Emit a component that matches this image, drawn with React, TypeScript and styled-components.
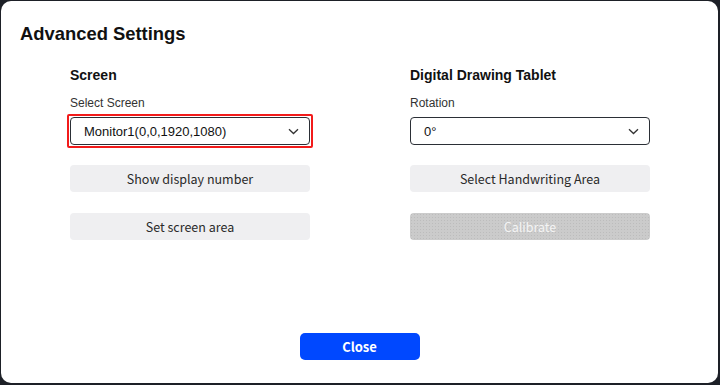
import React from "react";
import styled, { createGlobalStyle } from "styled-components";

const Global = createGlobalStyle`
  html, body { margin: 0; padding: 0; background: #1d2027; }
  body { width: 720px; height: 385px; overflow: hidden; }
  * { box-sizing: border-box; }
`;

const Frame = styled.div`
  width: 720px;
  height: 385px;
  padding: 1px 2px 2px 1px;
  background: #1d2027;
`;

const Card = styled.div`
  width: 100%;
  height: 100%;
  background: #fff;
  border-radius: 10px;
  display: flex;
  flex-direction: column;
  padding: 23px 0 0 19px;
`;

const Title = styled.h1`
  margin: 0;
  font-family: "Liberation Sans", Arial, sans-serif;
  font-weight: 700;
  font-size: 18.4px;
  line-height: 20px;
  color: #111;
`;

const Columns = styled.div`
  display: flex;
  gap: 100px;
  padding-left: 50px;
  margin-top: 22px;
`;

const Column = styled.div`
  width: 240px;
  display: flex;
  flex-direction: column;
`;

const Heading = styled.h2`
  margin: 0;
  font-family: "Liberation Sans", Arial, sans-serif;
  font-weight: 700;
  font-size: 14px;
  line-height: 18px;
  color: #111;
`;

const Label = styled.div`
  margin-top: 12px;
  font-family: "Liberation Sans", Arial, sans-serif;
  font-size: 12px;
  line-height: 14px;
  color: #333;
`;

const SelectWrap = styled.div<{ $highlight?: boolean }>`
  position: relative;
  margin-top: 7px;
  height: 28px;
  &::after {
    content: "";
    display: ${(p) => (p.$highlight ? "block" : "none")};
    position: absolute;
    left: -3px;
    top: -3px;
    right: -3px;
    bottom: -3px;
    border: 2px solid #f21b1b;
    border-radius: 2px;
    pointer-events: none;
  }
`;

const SelectBox = styled.div`
  height: 28px;
  border: 1px solid #2b2f36;
  border-radius: 4px;
  display: flex;
  align-items: center;
  justify-content: space-between;
  padding: 0 10px 0 13px;
  font-family: "Liberation Sans", Arial, sans-serif;
  font-size: 13px;
  color: #111;
`;

const Chevron = () => (
  <svg width="11" height="7" viewBox="0 0 11 7" fill="none">
    <path d="M1 1.2 L5.5 5.5 L10 1.2" stroke="#333" strokeWidth="1.3" />
  </svg>
);

const Button = styled.button<{ $first?: boolean; $disabled?: boolean }>`
  margin-top: ${(p) => (p.$first ? "20px" : "21px")};
  height: 27px;
  border: none;
  border-radius: 4px;
  background: ${(p) =>
    p.$disabled
      ? "radial-gradient(circle, #bcbcbc 0.5px, transparent 0.6px) 0 0 / 3px 3px, #cbcbcb"
      : "#efeff1"};
  color: ${(p) => (p.$disabled ? "#f4f4f4" : "#2a2a2a")};
  font-family: "Noto Sans CJK SC", "Open Sans", sans-serif;
  font-weight: 400;
  font-size: 12.5px;
  padding: 0;
  cursor: default;
`;

const Footer = styled.div`
  display: flex;
  justify-content: center;
  margin-top: 93px;
  padding-right: 19px;
`;

const CloseButton = styled.button`
  width: 120px;
  height: 27px;
  border: none;
  border-radius: 5px;
  background: #0048ff;
  color: #fff;
  font-family: "Noto Sans CJK SC", "Open Sans", sans-serif;
  font-weight: 700;
  font-size: 13px;
  padding: 0;
`;

export default function App() {
  return (
    <>
      <Global />
      <Frame>
        <Card>
          <Title>Advanced Settings</Title>
          <Columns>
            <Column>
              <Heading>Screen</Heading>
              <Label>Select Screen</Label>
              <SelectWrap $highlight>
                <SelectBox>
                  <span>Monitor1(0,0,1920,1080)</span>
                  <Chevron />
                </SelectBox>
              </SelectWrap>
              <Button $first>Show display number</Button>
              <Button>Set screen area</Button>
            </Column>
            <Column>
              <Heading>Digital Drawing Tablet</Heading>
              <Label>Rotation</Label>
              <SelectWrap>
                <SelectBox>
                  <span>0°</span>
                  <Chevron />
                </SelectBox>
              </SelectWrap>
              <Button $first>Select Handwriting Area</Button>
              <Button $disabled>Calibrate</Button>
            </Column>
          </Columns>
          <Footer>
            <CloseButton>Close</CloseButton>
          </Footer>
        </Card>
      </Frame>
    </>
  );
}
